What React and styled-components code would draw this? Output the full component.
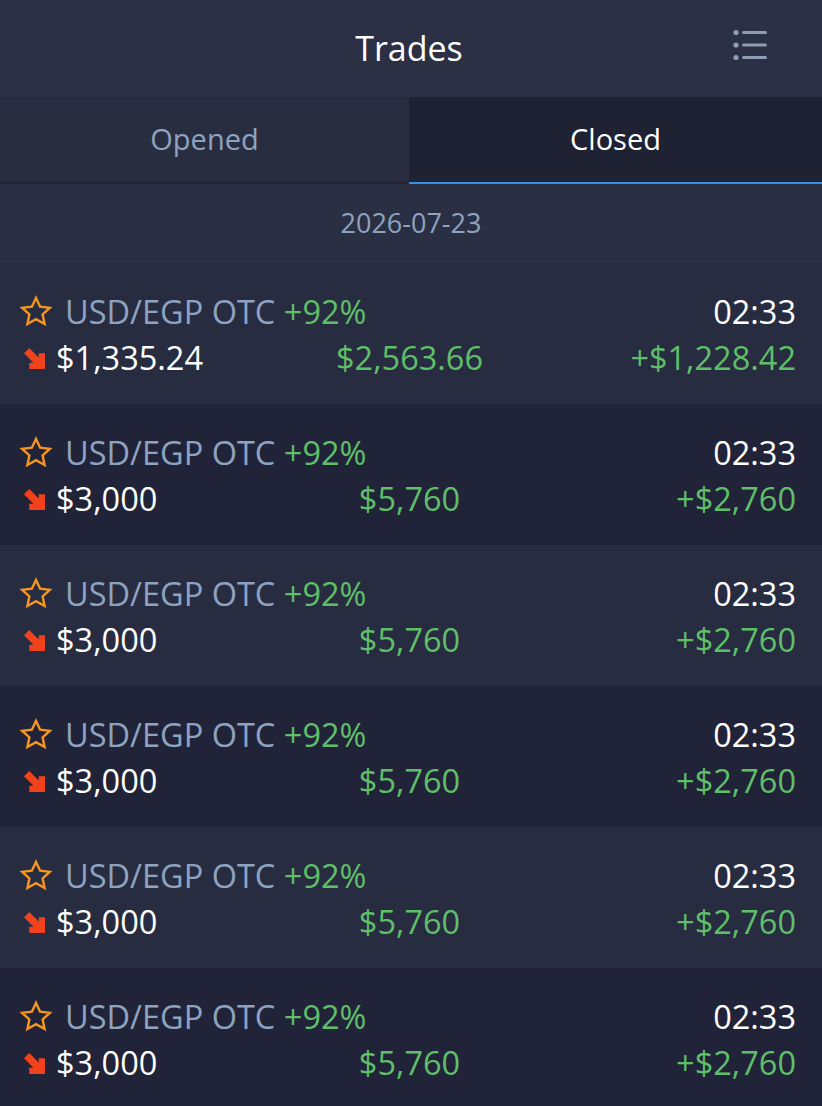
import React from "react";
import styled, { createGlobalStyle } from "styled-components";

const Global = createGlobalStyle`
  html, body { margin: 0; padding: 0; background: #21243a; }
  body { font-family: "Open Sans", "Noto Sans", sans-serif; }
  * { box-sizing: border-box; }
`;

const Page = styled.div`
  width: 822px;
  min-height: 1106px;
  background: #21243a;
  display: flex;
  flex-direction: column;
`;

const Header = styled.header`
  height: 97px;
  background: #2b3045;
  display: grid;
  grid-template-columns: 1fr auto 1fr;
  align-items: center;
  padding: 0 48px;
`;

const Title = styled.h1`
  grid-column: 2;
  margin: 0;
  font-size: 34px;
  font-weight: 400;
  color: #ffffff;
  line-height: 1;
  padding-bottom: 2px;
  margin-left: -4px;
`;

const MenuButton = styled.button`
  grid-column: 3;
  justify-self: end;
  background: none;
  border: none;
  padding: 0;
  width: 40px;
  height: 40px;
  display: flex;
  align-items: center;
  justify-content: center;
  margin-top: -8px;
  margin-right: 3px;
`;

const Tabs = styled.div`
  display: grid;
  grid-template-columns: 409px 1fr;
  height: 87px;
`;

const Tab = styled.div`
  display: flex;
  align-items: center;
  justify-content: center;
  font-size: 29px;
  padding-bottom: 2px;
  background: ${(p) => (p.$active ? "#1f2233" : "#292d40")};
  color: ${(p) => (p.$active ? "#ffffff" : "#8ea3c0")};
  border-bottom: 2px solid ${(p) => (p.$active ? "#3a8fe0" : "#232638")};
`;

const DateRow = styled.div`
  height: 79px;
  background: #2b2f43;
  display: flex;
  align-items: center;
  justify-content: center;
  font-size: 27px;
  color: #8ea3c0;
  padding-bottom: 2px;
`;

const Row = styled.div`
  height: 141px;
  background: ${(p) => (p.$alt ? "#212438" : "#282c41")};
  padding: 26px 26px 0 18px;
  display: flex;
  flex-direction: column;
  font-size: 32.5px;
  line-height: 46px;
`;

const Line = styled.div`
  display: grid;
  grid-template-columns: 1fr auto 1fr;
  align-items: center;
`;

const Left = styled.div`
  display: flex;
  align-items: center;
  white-space: nowrap;
`;

const IconSlot = styled.span`
  display: inline-flex;
  align-items: center;
  margin-left: ${(p) => p.$ml || 0}px;
  margin-right: ${(p) => p.$mr || 8}px;
`;

const Pair = styled.span`
  color: #8ea3c0;
`;

const Green = styled.span`
  color: #5fbf69;
`;

const White = styled.span`
  color: #ffffff;
`;

const Center = styled.div`
  text-align: center;
  color: #5fbf69;
  padding-left: 5px;
`;

const Right = styled.div`
  text-align: right;
  color: ${(p) => (p.$green ? "#5fbf69" : "#ffffff")};
`;

const Star = () => (
  <svg width="36" height="36" viewBox="0 0 24 24">
    <path
      d="M12 2.6l2.75 5.9 6.45.75-4.78 4.4 1.28 6.37L12 16.8l-5.7 3.22 1.28-6.37L2.8 9.25l6.45-.75z"
      fill="none"
      stroke="#f7961e"
      strokeWidth="1.6"
      strokeLinejoin="miter"
    />
  </svg>
);

const DownArrow = () => (
  <svg width="21" height="21" viewBox="0 0 20 20">
    <path d="M5 0L14 9V5H20V20H5V14H9L0 5z" fill="#f2421c" />
  </svg>
);

const MenuIcon = () => (
  <svg width="40" height="32" viewBox="0 0 40 32">
    <g fill="#8f9cb6">
      <circle cx="5" cy="3.5" r="2.6" />
      <circle cx="5" cy="16" r="2.6" />
      <circle cx="5" cy="28.5" r="2.6" />
      <rect x="11" y="2" width="25" height="3" rx="1.5" />
      <rect x="11" y="14.5" width="25" height="3" rx="1.5" />
      <rect x="11" y="27" width="25" height="3" rx="1.5" />
    </g>
  </svg>
);

const trades = [
  { amount: "$1,335.24", payout: "$2,563.66", profit: "+$1,228.42" },
  { amount: "$3,000", payout: "$5,760", profit: "+$2,760" },
  { amount: "$3,000", payout: "$5,760", profit: "+$2,760" },
  { amount: "$3,000", payout: "$5,760", profit: "+$2,760" },
  { amount: "$3,000", payout: "$5,760", profit: "+$2,760" },
  { amount: "$3,000", payout: "$5,760", profit: "+$2,760" },
];

export default function App() {
  return (
    <Page>
      <Global />
      <Header>
        <Title>Trades</Title>
        <MenuButton aria-label="menu">
          <MenuIcon />
        </MenuButton>
      </Header>
      <Tabs>
        <Tab>Opened</Tab>
        <Tab $active>Closed</Tab>
      </Tabs>
      <DateRow>2026-07-23</DateRow>
      {trades.map((t, i) => (
        <Row key={i} $alt={i % 2 === 1}>
          <Line>
            <Left>
              <IconSlot $mr={11}>
                <Star />
              </IconSlot>
              <Pair>USD/EGP OTC</Pair>&nbsp;<Green>+92%</Green>
            </Left>
            <span />
            <Right>02:33</Right>
          </Line>
          <Line>
            <Left>
              <IconSlot $ml={6} $mr={11}>
                <DownArrow />
              </IconSlot>
              <White>{t.amount}</White>
            </Left>
            <Center>{t.payout}</Center>
            <Right $green>{t.profit}</Right>
          </Line>
        </Row>
      ))}
    </Page>
  );
}
